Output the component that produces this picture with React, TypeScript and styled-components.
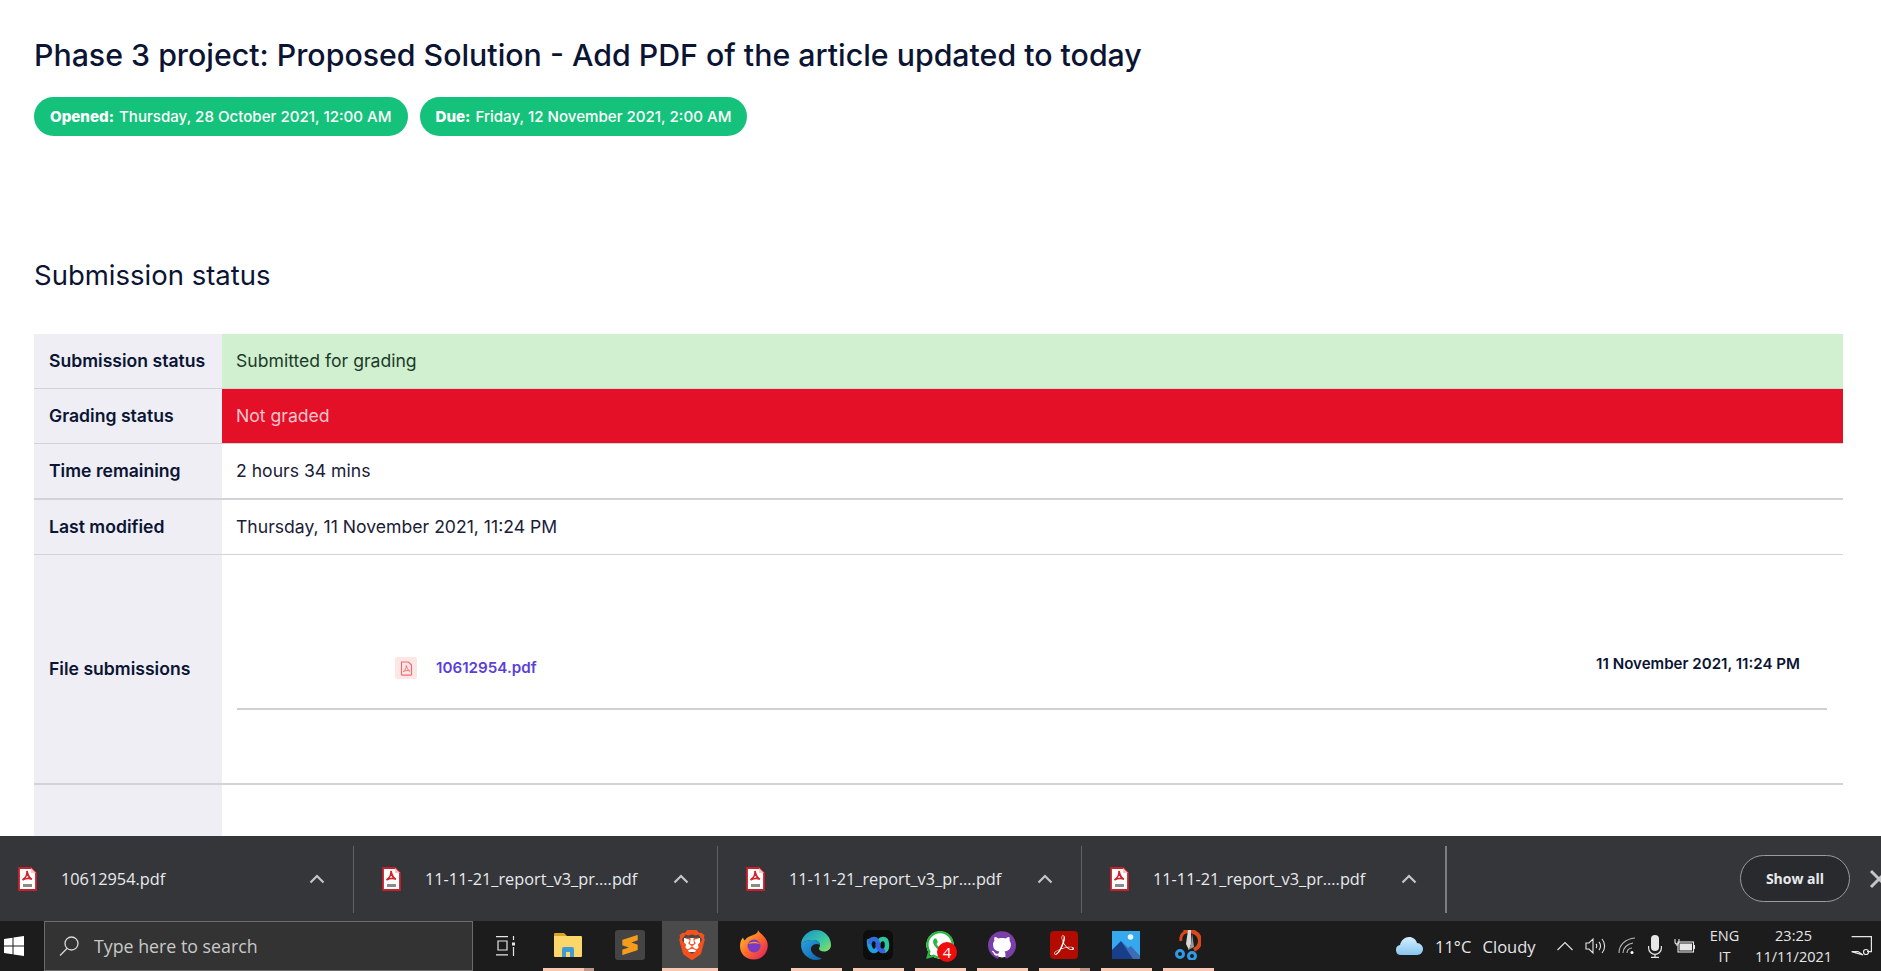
import React from 'react';
import styled, { createGlobalStyle } from 'styled-components';
import { SiBrave, SiSublimetext, SiGithub, SiWhatsapp, SiAdobeacrobatreader } from 'react-icons/si';

const GlobalStyle = createGlobalStyle`
  html, body { margin: 0; padding: 0; height: 100%; background: #fff; overflow: hidden; }
  #root { height: 971px; }
  * { box-sizing: border-box; }
`;

const Screen = styled.div`
  display: flex;
  flex-direction: column;
  height: 971px;
  width: 1881px;
  overflow: hidden;
  font-family: Inter, "Liberation Sans", sans-serif;
`;

const Page = styled.main`
  flex: 1;
  min-height: 0;
  overflow: hidden;
  padding: 36px 38px 0 34px;
  color: #0b1433;
`;

const Title = styled.h1`
  margin: 0;
  font-size: 30.3px;
  line-height: 38px;
  font-weight: 500;
`;

const PillRow = styled.div`
  display: flex;
  gap: 12px;
  margin-top: 23px;
`;

const Pill = styled.div`
  height: 39px;
  padding: 0 16px;
  display: flex;
  align-items: center;
  gap: 5px;
  border-radius: 20px;
  background: #15c27b;
  color: #fff;
  font-size: 15.1px;
  font-weight: 500;
  strong { font-weight: 800; }
`;

const SectionTitle = styled.h2`
  margin: 121px 0 0;
  font-size: 27.5px;
  line-height: 36px;
  font-weight: 400;
`;

const Table = styled.div`
  margin-top: 41px;
  display: flex;
  flex-direction: column;
  font-size: 17.6px;
  line-height: 24px;
`;

const Row = styled.div<{ $thick?: boolean; $last?: boolean }>`
  display: flex;
  border-bottom: ${p => (p.$last ? '0' : p.$thick ? '2px' : '1px')} solid #d2d2d8;
`;

const Label = styled.div`
  width: 188px;
  flex: none;
  padding: 15px 10px 15px 15px;
  display: flex;
  align-items: center;
  background: #eeeef4;
  font-weight: 600;
  white-space: nowrap;
`;

const Value = styled.div<{ $tone?: 'ok' | 'bad' }>`
  flex: 1;
  padding: 15px 15px 15px 14px;
  background: ${p => (p.$tone === 'ok' ? '#d0f0d0' : p.$tone === 'bad' ? '#e31028' : '#fff')};
  color: ${p => (p.$tone === 'bad' ? '#fbc4cc' : p.$tone === 'ok' ? '#1c3a2a' : '#1a2038')};
`;

const FileCell = styled.div`
  flex: 1;
  padding: 102px 16px 73px 15px;
`;

const FileLine = styled.div`
  display: flex;
  align-items: center;
  height: 22px;
  margin-bottom: 29px;
  padding: 0 27px 0 158px;
  border: 0;
`;

const FileBadge = styled.span`
  width: 22px;
  height: 22px;
  display: flex;
  align-items: center;
  justify-content: center;
  background: #fde6e6;
  border-radius: 2px;
  color: #ee6a6e;
`;

const FileLink = styled.a`
  margin-left: 19px;
  color: #5a3fd8;
  font-size: 15.2px;
  font-weight: 600;
  text-decoration: none;
`;

const FileDate = styled.span`
  margin-left: auto;
  margin-top: -8px;
  font-size: 15.1px;
  font-weight: 600;
`;

const Rule = styled.div`
  height: 2px;
  background: #d0d0d4;
`;

const EmptyRow = styled.div`
  height: 60px;
`;

const DownloadBar = styled.section`
  flex: none;
  height: 85px;
  display: flex;
  align-items: center;
  background: #35363a;
  color: #e8eaed;
  font-family: "Open Sans", "Noto Sans", sans-serif;
  overflow: hidden;
`;

const DownloadItem = styled.div<{ $first?: boolean }>`
  width: 353px;
  flex: none;
  margin-left: ${p => (p.$first ? 0 : 10)}px;
  padding: 0 28px 0 18px;
  display: flex;
  align-items: center;
  gap: 24px;
  font-size: 16.3px;
`;

const DownloadName = styled.span`
  flex: 1;
  white-space: nowrap;
`;

const Separator = styled.div<{ $strong?: boolean }>`
  width: ${p => (p.$strong ? 2 : 1)}px;
  height: 67px;
  margin-top: 2px;
  flex: none;
  background: ${p => (p.$strong ? '#7c7d80' : '#5f6063')};
`;

const ShowAll = styled.button`
  margin-left: auto;
  width: 110px;
  height: 47px;
  flex: none;
  border: 1px solid #9a9b9e;
  border-radius: 24px;
  background: #292a2d;
  color: #e8eaed;
  font: 700 14px "Open Sans", sans-serif;
`;

const CloseMark = styled.svg`
  flex: none;
  margin: 0 -8px 0 19px;
`;

const Taskbar = styled.footer`
  flex: none;
  height: 50px;
  display: flex;
  background: #1c1c1c;
  color: #e6e6e6;
  font-family: "Open Sans", "Noto Sans", sans-serif;
`;

const StartCell = styled.div`
  width: 44px;
  flex: none;
  display: flex;
  align-items: center;
  padding-left: 4px;
`;

const SearchBox = styled.div`
  width: 429px;
  flex: none;
  display: flex;
  align-items: center;
  gap: 15px;
  padding-left: 14px;
  background: #333;
  border: 1px solid #6b6b6b;
  color: #c9c9c9;
  font-size: 17.8px;
`;

const TaskView = styled.div`
  width: 64px;
  flex: none;
  display: flex;
  align-items: center;
  justify-content: center;
`;

const Slot = styled.div<{ $active?: boolean; $open?: boolean; $stacked?: boolean }>`
  position: relative;
  width: 62px;
  flex: none;
  display: flex;
  align-items: center;
  justify-content: center;
  padding-bottom: 2px;
  &::before {
    content: '';
    display: ${p => (p.$active ? 'block' : 'none')};
    position: absolute;
    inset: 0 5px 0 1px;
    background: #4a4a4a;
  }
  &::after {
    content: '';
    display: ${p => (p.$open ? 'block' : 'none')};
    position: absolute;
    left: ${p => (p.$active ? 1 : 6)}px;
    right: 5px;
    bottom: 0;
    height: 3px;
    background: ${p => (p.$stacked ? 'linear-gradient(90deg, #f7c8b2 80%, #bb9686 80%)' : '#f7c8b2')};
  }
  > * { position: relative; }
`;

const Tray = styled.div`
  flex: 1;
  display: flex;
  align-items: center;
  padding-left: 177px;
  font-size: 16px;
  white-space: nowrap;
`;

const Weather = styled.span`
  margin-left: 12px;
  word-spacing: 7px;
  font-size: 16.5px;
`;

const TrayIcons = styled.div`
  display: flex;
  align-items: center;
  gap: 12px;
  margin: 0 10px 0 21px;
`;

const Stack = styled.div<{ $w: number }>`
  width: ${p => p.$w}px;
  flex: none;
  text-align: center;
  font-size: 14.5px;
  line-height: 21px;
`;

const Bell = styled.svg`
  margin-left: 8px;
`;

const PdfGlyph = () => (
  <svg width="13" height="15" viewBox="0 0 13 15" fill="none" stroke="currentColor" strokeWidth="1.1">
    <path d="M1.5 1h7l3 3v9.5a.6.6 0 0 1-.6.6H2.1a.6.6 0 0 1-.6-.6z" />
    <path d="M6.3 4.5c.2 2-1.2 5-3 6 2-1 4.800-1.300 6.500-.4-1.700-.6-3-3.500-3.500-5.600z" strokeWidth=".9" />
  </svg>
);

const PdfDoc = () => (
  <svg width="19" height="24" viewBox="0 0 19 24">
    <path d="M1 1h12l5 5v17H1z" fill="#fff" stroke="#c8202a" strokeWidth="1.8" />
    <path d="M13 1v5h5" fill="#f3c6c6" />
    <path d="M9 4c.4 3-1.500 7-4.500 9 3-1.600 6.500-2 9.500-.8-2.600-1-4.300-4.700-5-8.200z" fill="none" stroke="#d3222c" strokeWidth="1.700" />
    <rect x="5" y="17" width="9" height="3" fill="#8a8a8a" />
  </svg>
);

const Chevron = () => (
  <svg width="16" height="10" viewBox="0 0 16 10" fill="none" stroke="#c4c5c8" strokeWidth="2.200">
    <path d="M1.500 8.500 8 2l6.500 6.500" />
  </svg>
);

const WindowsLogo = () => (
  <svg width="20" height="20" viewBox="0 0 20 20" fill="#fff">
    <path d="M0 3l8.500-1.200v7.700H0zM9.500 1.600 20 0v9.500H9.500zM0 10.500h8.500v7.700L0 17zM9.500 10.500H20V20L9.500 18.400z" />
  </svg>
);

const SearchGlyph = () => (
  <svg width="20" height="20" viewBox="0 0 20 20" fill="none" stroke="#d8d8d8" strokeWidth="1.300">
    <circle cx="12.500" cy="7.500" r="6.500" />
    <path d="M8 12.500 1 19.500" />
  </svg>
);

const TaskViewGlyph = () => (
  <svg width="21" height="20" viewBox="0 0 21 20" fill="none" stroke="#e6e6e6" strokeWidth="1.200">
    <path d="M1 .6h12M3 5h9v9H3zM1 18.800h12M18.500 0v4M18.500 11v9" />
    <rect x="17" y="6.500" width="3" height="3" fill="#e6e6e6" stroke="none" />
  </svg>
);

const ExplorerIcon = () => (
  <svg width="28" height="24" viewBox="0 0 28 24">
    <path d="M0 1a1 1 0 0 1 1-1h9l3 3H0z" fill="#d9a520" />
    <path d="M0 3h27a1 1 0 0 1 1 1v19a1 1 0 0 1-1 1H1a1 1 0 0 1-1-1z" fill="#fbd66a" />
    <path d="M8 24v-8a2 2 0 0 1 2-2h8a2 2 0 0 1 2 2v8h-4v-5h-4v5z" fill="#3f9bd8" />
  </svg>
);

const SublimeTile = styled.span`
  width: 30px;
  height: 30px;
  display: flex;
  align-items: center;
  justify-content: center;
  background: #444;
  border-radius: 3px;
`;

const SublimeIcon = () => (
  <SublimeTile>
    <SiSublimetext size={20} color="#f59c1c" />
  </SublimeTile>
);

const BraveWrap = styled.span`
  display: block;
  width: 28px;
  height: 30px;
  color: #f4511e;
  background: linear-gradient(#fff, #fff) center 8px / 16px 14px no-repeat;
  svg { display: block; margin-left: -1px; }
`;

const BraveIcon = () => (
  <BraveWrap>
    <SiBrave size={30} />
  </BraveWrap>
);

const FirefoxIcon = () => (
  <svg width="28" height="30" viewBox="0 0 28 30">
    <defs>
      <linearGradient id="ffBody" x1="0" y1="0" x2="1" y2="1">
        <stop offset="0" stopColor="#ffcb2d" />
        <stop offset=".5" stopColor="#ff6a2b" />
        <stop offset="1" stopColor="#d8186a" />
      </linearGradient>
    </defs>
    <path d="M18 0c1 3 8 6 9.500 13 1.500 9-5 16.500-13.500 16.500S0 24 0 16C0 12 1.500 9 3 7.500 3.500 9 4 10 5 10.500 6.500 7 11 6 13 5c3-1 5-2 5-5z" fill="url(#ffBody)" />
    <circle cx="14" cy="16" r="6.500" fill="#7b3ac2" />
    <path d="M8 14c3-3 9-3 12 0-2-1-9-1-12 0z" fill="#ff9a2b" />
  </svg>
);

const EdgeIcon = () => (
  <svg width="30" height="30" viewBox="0 0 30 30">
    <defs>
      <linearGradient id="edgeTop" x1="0" y1="0" x2="1" y2="1">
        <stop offset="0" stopColor="#1a8fd0" />
        <stop offset=".6" stopColor="#3dc9a0" />
        <stop offset="1" stopColor="#8be05c" />
      </linearGradient>
      <linearGradient id="edgeLow" x1="0" y1="0" x2="1" y2="1">
        <stop offset="0" stopColor="#2aa3e0" />
        <stop offset="1" stopColor="#0f5fa8" />
      </linearGradient>
    </defs>
    <path d="M15 0a15 15 0 0 1 15 15c0 4-3 6.500-7 6.500-3 0-5-1-5-3 0-1 1-1.500 1-3.500 0-3-3-5-7-5C6 10 1 12 0 15 0 7 7 0 15 0z" fill="url(#edgeTop)" />
    <path d="M0 15c1-3 6-5 12-5 4 0 7 2 7 5-3-2-8-1-9 3-1 5 5 9 11 10.500C19 29.500 17 30 15 30 7 30 0 23 0 15z" fill="url(#edgeLow)" />
  </svg>
);

const WebexTile = styled.span`
  width: 30px;
  height: 30px;
  display: flex;
  align-items: center;
  justify-content: center;
  background: #0d0d0d;
  border-radius: 6px;
`;

const WebexIcon = () => (
  <WebexTile>
    <svg width="24" height="18" viewBox="0 0 24 18" fill="none" strokeWidth="4.500" strokeLinecap="round">
      <path d="M3 5c0 6 2 10 5 10s4-4 4-6" stroke="#1f9fe0" />
      <path d="M12 9c0-3 2-6 5-6s4 3 4 6-1 6-4 6" stroke="#2ec4a0" />
      <path d="M12 9c0-2-1-6-4-6S4 5 4 6" stroke="#2f6fe0" />
      <path d="M12 9c0 3 2 6 5 6" stroke="#3a5fe0" />
    </svg>
  </WebexTile>
);

const WhatsappWrap = styled.span`
  position: relative;
  display: block;
  width: 28px;
  height: 28px;
  background: radial-gradient(circle at 50% 50%, #fff 68%, transparent 70%);
  color: #2cb742;
`;

const CountBadge = styled.span`
  position: absolute;
  left: 11px;
  top: 11px;
  width: 20px;
  height: 20px;
  border-radius: 50%;
  background: #f00d0d;
  color: #fff;
  font-size: 15px;
  line-height: 20px;
  text-align: center;
`;

const GithubWrap = styled.span`
  width: 28px;
  height: 28px;
  display: flex;
  align-items: center;
  justify-content: center;
  color: #7a3fa8;
  background: radial-gradient(circle, #fff 62%, transparent 64%);
  border-radius: 50%;
`;

const AcrobatTile = styled.span`
  width: 28px;
  height: 28px;
  display: flex;
  align-items: center;
  justify-content: center;
  background: #b30b00;
  border-radius: 4px;
  color: #fff;
`;

const PhotosIcon = () => (
  <svg width="28" height="28" viewBox="0 0 28 28">
    <rect width="28" height="28" fill="#35a8ee" />
    <circle cx="18.500" cy="6" r="2.800" fill="#e8f6ff" />
    <path d="M0 23 10 11l6 6 3-2 9 10v3H0z" fill="#3d6cb4" />
    <path d="M0 28v-9l9-9 12 18z" fill="#173f8a" />
  </svg>
);

const SnipIcon = () => (
  <svg width="26" height="30" viewBox="0 0 26 30">
    <path d="M9 2c7-3 16 1 16 9 0 4-2 7-6 9" fill="none" stroke="#d9481c" strokeWidth="4" />
    <path d="M10 2c-3 2-5 5-4 9" fill="none" stroke="#d9481c" strokeWidth="3" />
    <path d="M13 0h3v14l-2 6-3-6z" fill="#d8d8d8" />
    <path d="M17 3 16 15l-3 5 6-3z" fill="#9a9a9a" />
    <circle cx="5" cy="24" r="3.500" fill="none" stroke="#2f9be8" strokeWidth="3" />
    <circle cx="17" cy="26" r="3.500" fill="none" stroke="#2f9be8" strokeWidth="3" />
  </svg>
);

const CloudIcon = () => (
  <svg width="27" height="20" viewBox="0 0 27 20">
    <defs>
      <linearGradient id="cloudFill" x1="0" y1="0" x2="0" y2="1">
        <stop offset="0" stopColor="#d6efff" />
        <stop offset="1" stopColor="#86c6ee" />
      </linearGradient>
    </defs>
    <path d="M5 19a5 5 0 0 1-1-9.900C5 4 9 1 13 1c4 0 7 2.500 8 6 3.500.3 6 2.800 6 6s-2.500 6-6 6z" fill="url(#cloudFill)" />
  </svg>
);

const TrayChevron = () => (
  <svg width="16" height="10" viewBox="0 0 16 10" fill="none" stroke="#e6e6e6" strokeWidth="1.100">
    <path d="M.5 9 8 1.500 15.500 9" />
  </svg>
);

const SpeakerIcon = () => (
  <svg width="21" height="18" viewBox="0 0 21 18" fill="none" stroke="#e6e6e6" strokeWidth="1.100">
    <path d="M1 6h3l4-4v14l-4-4H1zM11 7c1 1 1 3 0 4M14 5c2 2 2 6 0 8M17 2c3.500 4 3.500 10 0 14" />
  </svg>
);

const WifiIcon = () => (
  <svg width="18" height="18" viewBox="0 0 18 18" fill="none" stroke="#b8b8b8" strokeWidth="1.100">
    <path d="M1 16C1 8 7 2 17 1M5 16c0-5 4-9 10-10M9 16c0-3 2-5 5-5" />
    <circle cx="14" cy="15.500" r="1.500" fill="#fff" stroke="none" />
  </svg>
);

const MicIcon = () => (
  <svg width="14" height="23" viewBox="0 0 14 23" fill="none" stroke="#e6e6e6" strokeWidth="1.200">
    <rect x="3" y="0" width="8" height="16" rx="4" fill="#e6e6e6" stroke="none" />
    <path d="M.6 11v2a6.400 6.400 0 0 0 12.800 0v-2M7 19.500V22M3 22.400h8" />
  </svg>
);

const BatteryIcon = () => (
  <svg width="21" height="16" viewBox="0 0 21 16" fill="none" stroke="#e6e6e6" strokeWidth="1.100">
    <rect x="4" y="4" width="15.500" height="10" />
    <rect x="5.500" y="5.500" width="12.500" height="7" fill="#e6e6e6" stroke="none" />
    <path d="M20.500 7v4M1 1v3a2 2 0 0 0 4 0V1M3 6v2" />
  </svg>
);

const NotifyIcon = () => (
  <Bell width="21" height="20" viewBox="0 0 21 20" fill="none" stroke="#e6e6e6" strokeWidth="1.200">
    <path d="M.6.6h19.800v15H16M12 19 7 15.600H.6z" />
    <circle cx="15" cy="16" r="2.500" />
  </Bell>
);

const downloads = ['10612954.pdf', '11-11-21_report_v3_pr....pdf', '11-11-21_report_v3_pr....pdf', '11-11-21_report_v3_pr....pdf'];

export default function App() {
  return (
    <Screen>
      <GlobalStyle />
      <Page>
        <Title>Phase 3 project: Proposed Solution - Add PDF of the article updated to today</Title>
        <PillRow>
          <Pill><strong>Opened:</strong> Thursday, 28 October 2021, 12:00 AM</Pill>
          <Pill><strong>Due:</strong> Friday, 12 November 2021, 2:00 AM</Pill>
        </PillRow>
        <SectionTitle>Submission status</SectionTitle>
        <Table>
          <Row>
            <Label>Submission status</Label>
            <Value $tone="ok">Submitted for grading</Value>
          </Row>
          <Row>
            <Label>Grading status</Label>
            <Value $tone="bad">Not graded</Value>
          </Row>
          <Row $thick>
            <Label>Time remaining</Label>
            <Value>2 hours 34 mins</Value>
          </Row>
          <Row>
            <Label>Last modified</Label>
            <Value>Thursday, 11 November 2021, 11:24 PM</Value>
          </Row>
          <Row $thick>
            <Label>File submissions</Label>
            <FileCell>
              <FileLine>
                <FileBadge><PdfGlyph /></FileBadge>
                <FileLink href="#">10612954.pdf</FileLink>
                <FileDate>11 November 2021, 11:24 PM</FileDate>
              </FileLine>
              <Rule />
            </FileCell>
          </Row>
          <Row $last>
            <Label><EmptyRow /></Label>
          </Row>
        </Table>
      </Page>
      <DownloadBar>
        {downloads.map((name, i) => (
          <React.Fragment key={i}>
            <DownloadItem $first={i === 0}>
              <PdfDoc />
              <DownloadName>{name}</DownloadName>
              <Chevron />
            </DownloadItem>
            <Separator $strong={i === downloads.length - 1} />
          </React.Fragment>
        ))}
        <ShowAll>Show all</ShowAll>
        <CloseMark width="20" height="20" viewBox="0 0 20 20" fill="none" stroke="#c4c5c8" strokeWidth="3">
          <path d="M2 2l16 16M18 2 2 18" />
        </CloseMark>
      </DownloadBar>
      <Taskbar>
        <StartCell><WindowsLogo /></StartCell>
        <SearchBox><SearchGlyph />Type here to search</SearchBox>
        <TaskView><TaskViewGlyph /></TaskView>
        <Slot $open $stacked><ExplorerIcon /></Slot>
        <Slot><SublimeIcon /></Slot>
        <Slot $active $open><BraveIcon /></Slot>
        <Slot><FirefoxIcon /></Slot>
        <Slot $open><EdgeIcon /></Slot>
        <Slot $open><WebexIcon /></Slot>
        <Slot $open>
          <WhatsappWrap>
            <SiWhatsapp size={28} />
            <CountBadge>4</CountBadge>
          </WhatsappWrap>
        </Slot>
        <Slot $open><GithubWrap><SiGithub size={28} /></GithubWrap></Slot>
        <Slot $open $stacked><AcrobatTile><SiAdobeacrobatreader size={20} /></AcrobatTile></Slot>
        <Slot $open><PhotosIcon /></Slot>
        <Slot $open><SnipIcon /></Slot>
        <Tray>
          <CloudIcon />
          <Weather>11°C Cloudy</Weather>
          <TrayIcons>
            <TrayChevron />
            <SpeakerIcon />
            <WifiIcon />
            <MicIcon />
            <BatteryIcon />
          </TrayIcons>
          <Stack $w={40}>ENG<br />IT</Stack>
          <Stack $w={98}>23:25<br />11/11/2021</Stack>
          <NotifyIcon />
        </Tray>
      </Taskbar>
    </Screen>
  );
}
